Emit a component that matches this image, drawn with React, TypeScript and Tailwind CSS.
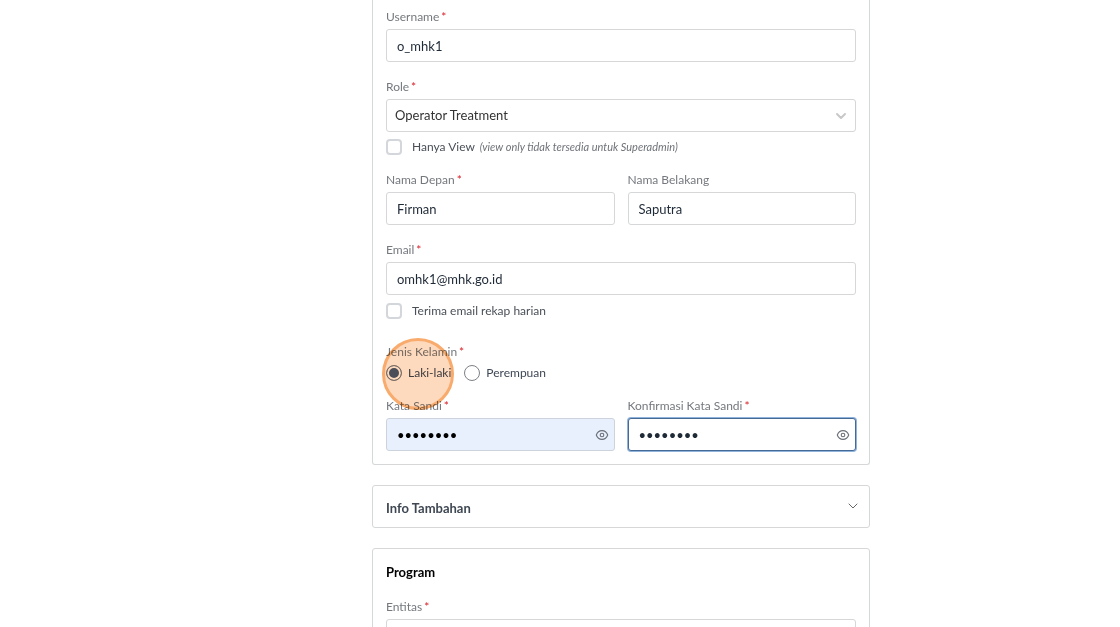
import { useState } from 'react';
import type { ReactNode } from 'react';

const inputClass =
  'block w-full h-[33px] px-[10px] rounded-[3px] border border-[#d6d7d9] bg-white text-[13px] text-[#1f2a37] outline-none';

function Label({ htmlFor, required, children }: { htmlFor: string; required?: boolean; children: ReactNode }) {
  return (
    <label htmlFor={htmlFor} className="block text-[12px] leading-4 text-[#75797e]">
      {children}
      {required && <span className="ml-[2px] text-[#d92028]">*</span>}
    </label>
  );
}

function TextField({ id, label, value, required }: { id: string; label: string; value?: string; required?: boolean }) {
  return (
    <div className="flex flex-col gap-1">
      <Label htmlFor={id} required={required}>{label}</Label>
      <input id={id} type="text" defaultValue={value} className={inputClass} />
    </div>
  );
}

function Chevron({ className }: { className: string }) {
  return (
    <svg viewBox="0 0 12 12" fill="none" stroke="currentColor" strokeLinecap="round" strokeLinejoin="round" className={className}>
      <path d="M2 4l4 4 4-4" />
    </svg>
  );
}

function PasswordField({ id, label, fieldClass }: { id: string; label: string; fieldClass: string }) {
  const [visible, setVisible] = useState(false);
  return (
    <div className="flex flex-col gap-1">
      <Label htmlFor={id} required>{label}</Label>
      <div className="relative">
        <input
          id={id}
          type={visible ? 'text' : 'password'}
          defaultValue="firman01"
          className={`block w-full h-[33px] pl-[10px] pr-8 rounded-[3px] border text-[13px] outline-none ${fieldClass}`}
        />
        <button
          type="button"
          aria-label="Lihat sandi"
          onClick={() => setVisible(!visible)}
          className="absolute right-[6px] top-[9px] flex h-4 w-[14px] items-center justify-center text-[#6b7078]"
        >
          <svg viewBox="0 0 14 12" fill="none" stroke="currentColor" className="h-3 w-[14px] shrink-0">
            <path d="M1.300 6C2.300 3.100 4.400 1.600 7 1.600S11.700 3.100 12.700 6C11.700 8.900 9.600 10.400 7 10.400S2.300 8.900 1.300 6z" strokeWidth="1.1" />
            <circle cx="7" cy="6" r="1.800" strokeWidth="1.1" />
          </svg>
        </button>
      </div>
    </div>
  );
}

const checkboxClass =
  'size-4 shrink-0 appearance-none rounded-[4px] border-2 border-[#d3d6da] bg-white checked:bg-[#4a5568]';
const radioClass =
  'size-4 shrink-0 appearance-none rounded-full border border-[#7d8086] bg-white checked:bg-[#4b5a78] checked:shadow-[inset_0_0_0_2px_#fff]';

export default function App() {
  return (
    <div className="h-screen overflow-hidden bg-white pl-[122px] font-['Lato',sans-serif]">
      <form className="mx-auto flex max-w-[498px] flex-col gap-5">
        <section className="rounded-b-[3px] border border-t-0 border-[#d6d7d9] px-[13px] pt-[9px] pb-[13px]">
          <div className="flex flex-col gap-[17px]">
            <TextField id="username" label="Username" value="o_mhk1" required />
            <div>
              <div className="flex flex-col gap-1">
                <Label htmlFor="role" required>Role</Label>
                <div className="relative">
                  <select
                    id="role"
                    className="block h-[33px] w-full appearance-none rounded-[3px] border border-[#d6d7d9] bg-white pr-8 pl-2 text-[13px] text-[#333333] outline-none"
                  >
                    <option>Operator Treatment</option>
                  </select>
                  <Chevron className="pointer-events-none absolute top-[11px] right-[9px] size-3 stroke-2 text-[#c8c8c8]" />
                </div>
              </div>
              <div className="mt-[7px] flex h-4 items-center text-[12px] text-[#4a5058]">
                <input id="view" type="checkbox" className={checkboxClass} />
                <label htmlFor="view" className="pl-[10px]">
                  Hanya View <em className="ml-[2px] text-[11px] text-[#6f7378]">(view only tidak tersedia untuk Superadmin)</em>
                </label>
              </div>
            </div>
            <div className="grid grid-cols-2 gap-[13px]">
              <TextField id="first" label="Nama Depan" value="Firman" required />
              <TextField id="last" label="Nama Belakang" value="Saputra" />
            </div>
            <div>
              <TextField id="email" label="Email" value="omhk1@mhk.go.id" required />
              <div className="mt-2 flex h-4 items-center text-[12px] text-[#4a5058]">
                <input id="recap" type="checkbox" className={checkboxClass} />
                <label htmlFor="recap" className="pl-[10px]">Terima email rekap harian</label>
              </div>
            </div>
            <fieldset className="mt-2">
              <legend className="text-[12px] leading-4 text-[#75797e]">
                Jenis Kelamin<span className="ml-[2px] text-[#d92028]">*</span>
              </legend>
              <div className="mt-[5px] flex gap-[13px] text-[12px] leading-4 text-[#3f4855]">
                <div className="relative flex items-center">
                  <input id="male" type="radio" name="gender" defaultChecked className={radioClass} />
                  <label htmlFor="male" className="pl-[6px]">Laki-laki</label>
                  {/* click highlight */}
                  <span className="pointer-events-none absolute -top-[27px] -left-[4px] size-[72px] rounded-full border-3 border-[#f8ab6c] bg-[#fdd9bd] mix-blend-multiply" />
                </div>
                <div className="flex items-center">
                  <input id="female" type="radio" name="gender" className={radioClass} />
                  <label htmlFor="female" className="pl-[6px]">Perempuan</label>
                </div>
              </div>
            </fieldset>
            <div className="grid grid-cols-2 gap-[13px]">
              <PasswordField id="password" label="Kata Sandi" fieldClass="border-[#cdd3dd] bg-[#e8f0fe] text-black" />
              <PasswordField
                id="confirm"
                label="Konfirmasi Kata Sandi"
                fieldClass="border-[#456a96] bg-white text-[#1f2a37] shadow-[0_0_0_1px_#8fb3da]"
              />
            </div>
          </div>
        </section>

        <button
          type="button"
          className="flex items-start justify-between rounded-[3px] border border-[#d6d7d9] pt-3 pr-[10px] pb-[9px] pl-[13px] text-left"
        >
          <span className="text-[13px] leading-5 font-bold text-[#3e4752]">Info Tambahan</span>
          <Chevron className="mt-[2px] size-3 text-[#666666]" />
        </button>

        <section className="rounded-[3px] border border-[#d6d7d9] px-[13px] pt-[13px] pb-[13px]">
          <h2 className="text-[13px] leading-5 font-bold text-black">Program</h2>
          <div className="mt-[17px]">
            <TextField id="entity" label="Entitas" required />
          </div>
        </section>
      </form>
    </div>
  );
}
